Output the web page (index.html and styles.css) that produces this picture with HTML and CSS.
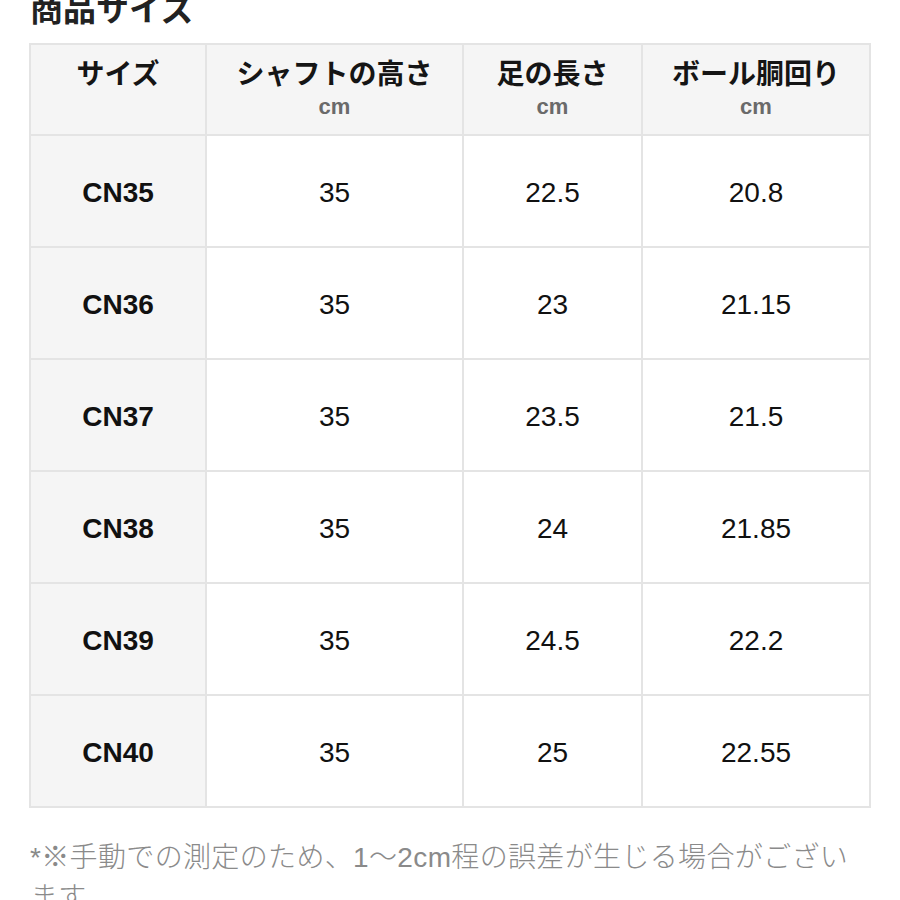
FILE: index.html
```html
<!DOCTYPE html>
<html lang="ja">
<head>
<meta charset="utf-8">
<link rel="stylesheet" href="styles.css">
</head>
<body>
<div class="page">
  <h2 class="title">商品サイズ</h2>
  <div class="table">
    <div class="cell head side"><span class="label">サイズ</span></div>
    <div class="cell head"><span class="label">シャフトの高さ</span><span class="unit">cm</span></div>
    <div class="cell head"><span class="label">足の長さ</span><span class="unit">cm</span></div>
    <div class="cell head"><span class="label">ボール胴回り</span><span class="unit">cm</span></div>

    <div class="cell side size">CN35</div><div class="cell">35</div><div class="cell">22.5</div><div class="cell">20.8</div>
    <div class="cell side size">CN36</div><div class="cell">35</div><div class="cell">23</div><div class="cell">21.15</div>
    <div class="cell side size">CN37</div><div class="cell">35</div><div class="cell">23.5</div><div class="cell">21.5</div>
    <div class="cell side size">CN38</div><div class="cell">35</div><div class="cell">24</div><div class="cell">21.85</div>
    <div class="cell side size">CN39</div><div class="cell">35</div><div class="cell">24.5</div><div class="cell">22.2</div>
    <div class="cell side size">CN40</div><div class="cell">35</div><div class="cell">25</div><div class="cell">22.55</div>
  </div>
  <p class="note">*※手動での測定のため、1〜2cm程の誤差が生じる場合がございます。</p>
</div>
</body>
</html>
```

FILE: styles.css
```css
html, body {
  margin: 0;
  padding: 0;
  background: #ffffff;
}
body {
  font-family: "Liberation Sans", "Noto Sans CJK JP", sans-serif;
  color: #1a1a1a;
}
.page {
  width: 842px;
  margin-left: 29px;
}
.title {
  margin: -10px 0 13px 1px;
  font-size: 33px;
  line-height: 40px;
  font-weight: 700;
  color: #222222;
}
.table {
  display: grid;
  grid-template-columns: 174px 255px 177px 226px;
  grid-template-rows: 89px repeat(6, 110px);
  gap: 2px;
  padding: 2px;
  background: #e4e4e4;
}
.cell {
  background: #ffffff;
  display: flex;
  align-items: center;
  justify-content: center;
  padding-top: 3px;
  font-size: 28px;
  color: #111111;
}
.cell.side {
  background: #f5f5f5;
}
.cell.head {
  background: #f5f5f5;
  flex-direction: column;
  justify-content: flex-start;
  padding-top: 13px;
}
.label {
  font-size: 28px;
  line-height: 34px;
  font-weight: 700;
  color: #151515;
}
.unit {
  font-size: 22px;
  line-height: 30px;
  font-weight: 700;
  color: #6a6a6a;
}
.size {
  font-weight: 700;
  color: #111111;
}
.note {
  margin: 30px 0 0 1px;
  font-size: 28px;
  line-height: 40px;
  letter-spacing: 0.35px;
  font-weight: 300;
  color: #8a8a8a;
}
```
